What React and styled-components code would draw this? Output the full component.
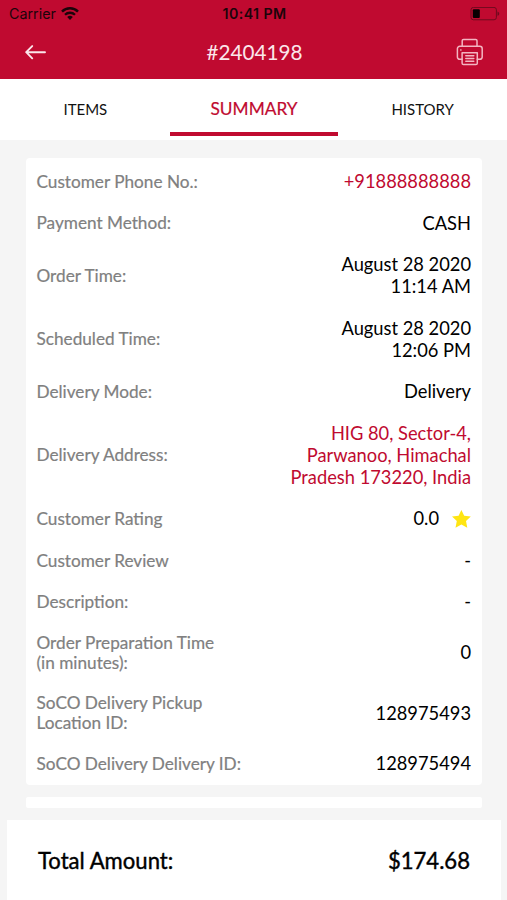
import React from "react";
import styled, { createGlobalStyle } from "styled-components";

const rows = [
  { label: "Customer Phone No.:", value: ["+91888888888"], link: true },
  { label: "Payment Method:", value: ["CASH"] },
  { label: "Order Time:", value: ["August 28 2020", "11:14 AM"] },
  { label: "Scheduled Time:", value: ["August 28 2020", "12:06 PM"] },
  { label: "Delivery Mode:", value: ["Delivery"] },
  {
    label: "Delivery Address:",
    value: ["HIG 80, Sector-4,", "Parwanoo, Himachal", "Pradesh 173220, India"],
    link: true,
  },
  { label: "Customer Rating", value: ["0.0"], star: true },
  { label: "Customer Review", value: ["-"] },
  { label: "Description:", value: ["-"] },
  { label: "Order Preparation Time (in\u00a0minutes):", value: ["0"] },
  { label: "SoCO Delivery Pickup Location ID:", value: ["128975493"] },
  { label: "SoCO Delivery Delivery ID:", value: ["128975494"] },
];

const App = () => {
  return (
    <Screen>
      <GlobalStyle />
      <Header>
        <StatusBar>
          <Carrier>
            Carrier
            <WifiIcon />
          </Carrier>
          <Clock>10:41 PM</Clock>
          <BatteryIcon />
        </StatusBar>
        <TitleBar>
          <BackIcon />
          <Title>#2404198</Title>
          <PrinterIcon />
        </TitleBar>
      </Header>
      <Tabs>
        <Tab>ITEMS</Tab>
        <Tab $active>SUMMARY</Tab>
        <Tab>HISTORY</Tab>
      </Tabs>
      <Content>
        <Card>
          {rows.map((row) => (
            <Row key={row.label}>
              <Label>{row.label}</Label>
              <Value $link={row.link}>
                <div>
                  {row.value.map((line) => (
                    <Line key={line}>{line}</Line>
                  ))}
                </div>
                {row.star && <StarIcon />}
              </Value>
            </Row>
          ))}
        </Card>
        <EmptyCard />
      </Content>
      <Total>
        <span>Total Amount:</span>
        <span>$174.68</span>
      </Total>
    </Screen>
  );
};

const WifiIcon = () => (
  <svg width="18" height="14" viewBox="0 0 18 14" fill="none" stroke="#1c040a">
    <path d="M1 4.6a11.4 11.4 0 0 1 16 0" strokeWidth="2.5" />
    <path d="M4 7.8a7.1 7.1 0 0 1 10 0" strokeWidth="2.3" />
    <path d="M9 12.9 6.2 10.1a4 4 0 0 1 5.6 0z" fill="#1c040a" stroke="none" />
  </svg>
);

const BatteryIcon = () => (
  <svg width="30" height="14" viewBox="0 0 30 14">
    <rect x="1" y="0.4" width="25.4" height="12.4" rx="2.4" fill="none" stroke="#6e0a1e" />
    <rect x="2.8" y="2.2" width="7" height="8.8" rx="1" fill="#080002" />
    <path d="M27.5 4.4c2.3.9 2.3 3.5 0 4.4z" fill="#6e0a1e" />
  </svg>
);

const BackIcon = () => (
  <svg
    width="22"
    height="16"
    viewBox="0 0 22 16"
    fill="none"
    stroke="#fbe6ea"
    strokeWidth="1.9"
    strokeLinecap="round"
    strokeLinejoin="round"
  >
    <path d="M20 8.2H1.5M7.2 2.1 1.2 8.2l6 6.1" />
  </svg>
);

const PrinterIcon = () => (
  <svg
    width="28"
    height="28"
    viewBox="0 0 28 28"
    fill="none"
    stroke="#f3b5c1"
    strokeWidth="1.5"
    strokeLinecap="round"
    strokeLinejoin="round"
  >
    <path d="M6.2 8.2V2.8a1.3 1.3 0 0 1 1.3-1.3h12.2A1.3 1.3 0 0 1 21 2.8v5.4" />
    <path d="M6.1 21.3H3.7a2.3 2.3 0 0 1-2.3-2.3v-8.3a2.4 2.4 0 0 1 2.4-2.4h20a2.4 2.4 0 0 1 2.4 2.4V19a2.3 2.3 0 0 1-2.3 2.3h-2.6" />
    <path d="M6.1 14.7h15.2v10.5a1.4 1.4 0 0 1-1.4 1.4H7.5a1.4 1.4 0 0 1-1.4-1.4z" />
    <path d="M9.8 17.7h8M9.8 20.5h8M9.8 23.3h8M4.7 11.9h.3" />
  </svg>
);

const StarIcon = () => (
  <svg width="20" height="19" viewBox="0 0 20 19">
    <path
      d="M10.4 0l2.8 5.7 6.6.8-4.8 4.6 1.3 6.7-5.9-3.2-5.9 3.2 1.3-6.7L1 6.5l6.6-.8z"
      fill="#ffe512"
    />
  </svg>
);

const GlobalStyle = createGlobalStyle`
  * {
    box-sizing: border-box;
  }
  body {
    margin: 0;
    font-family: Lato, sans-serif;
    background-color: #f5f5f5;
  }
`;

const Screen = styled.div`
  display: flex;
  flex-direction: column;
  width: 507px;
  height: 900px;
  overflow: hidden;
  background-color: #f5f5f5;
`;

const Header = styled.header`
  height: 79px;
  background-color: #c00a30;
`;

const StatusBar = styled.div`
  display: grid;
  grid-template-columns: 1fr auto 1fr;
  align-items: center;
  height: 27px;
  padding: 0 7px 0 9px;
  font-family: Inter, sans-serif;
  font-size: 14.2px;
  color: #1c040a;

  & > svg {
    justify-self: end;
  }
`;

const Carrier = styled.div`
  display: flex;
  align-items: center;
  gap: 5.5px;
  font-size: 14.3px;
`;

const Clock = styled.div`
  font-weight: 600;
  letter-spacing: 0.4px;
`;

const TitleBar = styled.div`
  display: grid;
  grid-template-columns: 1fr auto 1fr;
  align-items: center;
  height: 50px;
  padding: 0 23px 0 25px;

  & > svg:last-child {
    justify-self: end;
  }
`;

const Title = styled.h1`
  margin: 0;
  font-size: 20.7px;
  font-weight: 400;
  color: #fbe6ea;
`;

const Tabs = styled.nav`
  display: flex;
  height: 61px;
  padding-left: 1px;
  background-color: #fff;
`;

const Tab = styled.div`
  flex: 1;
  display: flex;
  align-items: center;
  justify-content: center;
  height: 57px;
  padding-top: ${({ $active }) => ($active ? "6px" : "2px")};
  border-bottom: ${({ $active }) => ($active ? "4px solid #c00a30" : "none")};
  font-size: ${({ $active }) => ($active ? "17.3px" : "15px")};
  color: ${({ $active }) => ($active ? "#c00a30" : "#111")};
  -webkit-text-stroke: ${({ $active }) => ($active ? "0.2px" : "0")};
`;

const Content = styled.main`
  flex: 1;
  padding: 18px 25px 0 26px;
`;

const Card = styled.section`
  padding-top: 3.1px;
  border-radius: 4px;
  background-color: #fff;
`;

const Row = styled.div`
  display: flex;
  align-items: center;
  justify-content: space-between;
  padding: 9.85px 11px 9.85px 10.5px;

  &:last-child {
    padding-bottom: 9.2px;
  }
`;

/* Lato has no medium cut here, a hairline stroke gives the same weight */
const Label = styled.div`
  max-width: 210px;
  font-size: 17.2px;
  line-height: 20.3px;
  color: #808080;
  -webkit-text-stroke: 0.2px;
`;

const Value = styled.div`
  display: flex;
  align-items: center;
  gap: 12px;
  font-size: 18.3px;
  line-height: 21.9px;
  text-align: right;
  color: ${({ $link }) => ($link ? "#c00a30" : "#000")};
`;

const Line = styled.div`
  white-space: nowrap;
`;

const EmptyCard = styled.div`
  height: 11px;
  margin-top: 12px;
  border-radius: 2px;
  background-color: #fff;
`;

const Total = styled.footer`
  display: flex;
  align-items: center;
  justify-content: space-between;
  height: 80px;
  margin: 0 6px 0 7px;
  padding: 0 31px;
  background-color: #fff;
  font-size: 22.1px;
  color: #000;
  -webkit-text-stroke: 0.4px;
`;

export default App;
